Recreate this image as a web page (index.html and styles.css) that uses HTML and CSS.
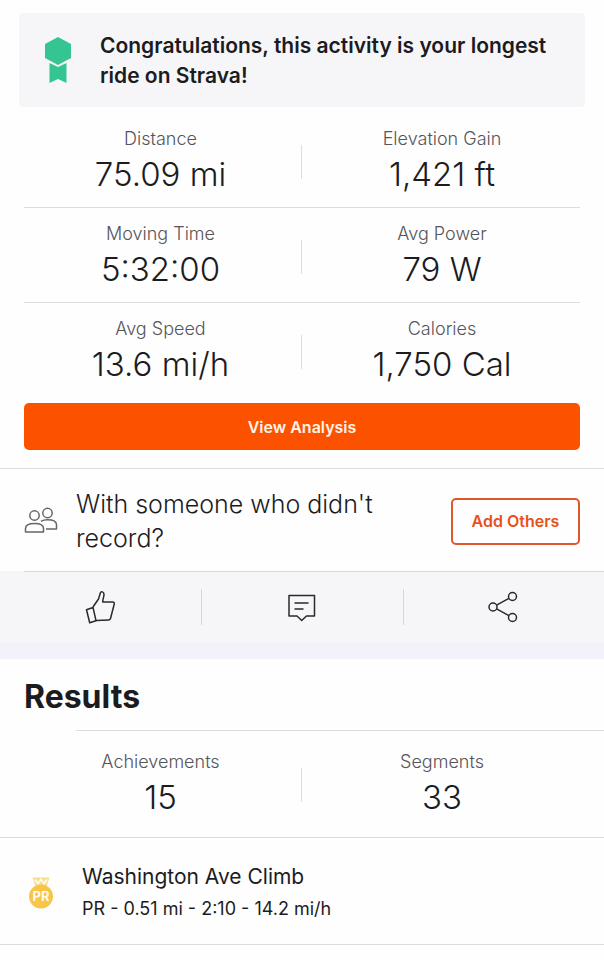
FILE: index.html
```html
<!DOCTYPE html>
<html lang="en">
	<head>
		<meta charset="UTF-8">
		<meta name="viewport" content="width=device-width, initial-scale=1">
		<title>Activity</title>
		<link rel="stylesheet" href="styles.css">
	</head>
	<body>
		<main>
			<section class="banner">
				<svg class="ribbon" width="28" height="48" viewBox="0 0 28 48" aria-hidden="true">
					<path d="M14 0l13 7v14l-13 7-13-7V7z"/>
					<path d="M5.500 26l8.500 4 8.500-4v20l-8.500-4-8.500 4z"/>
				</svg>
				<p>Congratulations, this activity is your longest ride on Strava!</p>
			</section>

			<section class="stats">
				<div class="row">
					<div class="stat"><span class="label">Distance</span><span class="value">75.09 mi</span></div>
					<div class="stat"><span class="label">Elevation Gain</span><span class="value">1,421 ft</span></div>
				</div>
				<div class="row">
					<div class="stat"><span class="label">Moving Time</span><span class="value">5:32:00</span></div>
					<div class="stat"><span class="label">Avg Power</span><span class="value">79 W</span></div>
				</div>
				<div class="row">
					<div class="stat"><span class="label">Avg Speed</span><span class="value">13.6 mi/h</span></div>
					<div class="stat"><span class="label">Calories</span><span class="value">1,750 Cal</span></div>
				</div>
				<button type="button" class="analysis">View Analysis</button>
			</section>

			<section class="others">
				<svg class="people" width="34" height="28" viewBox="0 0 34 28" aria-hidden="true">
					<circle cx="10.500" cy="8.500" r="4.700"/>
					<circle cx="23.500" cy="6" r="4.700"/>
					<path d="M1.500 25v-3.500c0-3 3.500-5 9-5s9 2 9 5V25z"/>
					<path d="M17 14.300c1.500-1 3.700-1.500 6.500-1.500 5.500 0 9 2 9 5V22H22"/>
				</svg>
				<p>With someone who didn't record?</p>
				<button type="button" class="add">Add Others</button>
			</section>

			<div class="actions">
				<button type="button" aria-label="Give kudos">
					<svg width="32" height="34" viewBox="0 0 32 34" aria-hidden="true">
						<path d="M8 17l5.500-8 2-6.500c.4-1.300 3.500-1 3.500 2 0 2.500-1.300 4.500-1.300 7.500h10c1.300 0 1.800 1 1.500 2.200L25.500 28.500c-.3 1.200-.9 1.500-2 1.500l-12.500.4"/>
						<path d="M8 17.500L1.500 19.700l3.200 13.100 6.300-2.100z"/>
					</svg>
				</button>
				<button type="button" aria-label="Comment">
					<svg width="32" height="34" viewBox="0 0 32 34" aria-hidden="true">
						<path d="M3 5.500h25.500v20.500h-8L15.700 30.500 11 26H3z"/>
						<path d="M8.500 13h14M8.500 19h9"/>
					</svg>
				</button>
				<button type="button" aria-label="Share">
					<svg width="32" height="34" viewBox="0 0 32 34" aria-hidden="true">
						<circle cx="6" cy="17" r="4"/>
						<circle cx="25.500" cy="6.500" r="4"/>
						<circle cx="25.500" cy="27.500" r="4"/>
						<path d="M9.600 15.200l12.300-6.800M9.600 18.800l12.300 6.800"/>
					</svg>
				</button>
			</div>

			<section class="results">
				<h2>Results</h2>
				<div class="row">
					<div class="stat"><span class="label">Achievements</span><span class="value">15</span></div>
					<div class="stat"><span class="label">Segments</span><span class="value">33</span></div>
				</div>
				<a class="segment" href="#">
					<svg class="medal" width="26" height="34" viewBox="0 0 26 34" aria-hidden="true">
						<path class="strap" d="M4.500 1.500h17l-3 9H7.500z"/>
						<path class="stripe" d="M7 3.500l3 4 3-4 3 4 3-4"/>
						<circle cx="13" cy="20.500" r="12"/>
						<text x="13" y="25" text-anchor="middle">PR</text>
					</svg>
					<div>
						<h3>Washington Ave Climb</h3>
						<p>PR - 0.51 mi - 2:10 - 14.2 mi/h</p>
					</div>
				</a>
			</section>
		</main>
	</body>
</html>
```
FILE: styles.css
```css
*{
	box-sizing: border-box;
	margin: 0;
	padding: 0;
}
body{
	background: #fefefe;
	color: #1c1c1f;
	font-family: Inter, "Liberation Sans", sans-serif;
}
button{
	font-family: inherit;
	cursor: pointer;
}
svg{
	flex: none;
}

.banner{
	display: flex;
	align-items: center;
	gap: 28px;
	margin: 13px 19px 6px;
	padding: 18px 25px 16px;
	border-radius: 4px;
	background: #f6f6f9;
}
.banner p{
	font-size: 21px;
	font-weight: 600;
	line-height: 30px;
}
.ribbon{
	fill: #35c592;
}

.stats{
	padding: 0 24px 18px;
}
.row{
	display: grid;
	grid-template-columns: 1fr 1fr;
	padding: 14px 0 11px;
}
.stats .row{
	border-bottom: 1px solid #dcdce2;
}
.stats .row:nth-child(3){
	padding-bottom: 17px;
	border-bottom: 0;
}
.stat{
	display: flex;
	flex-direction: column;
	align-items: center;
	height: 69px;
	padding-left: 2px;
}
.stat:first-child{
	padding: 0 5px 0 0;
	background: linear-gradient(#dcdce2, #dcdce2) right 18px / 1px 34px no-repeat;
}
.label{
	color: #55555a;
	font-size: 18px;
	font-weight: 300;
	line-height: 24px;
}
.value{
	font-size: 33px;
	font-weight: 300;
	line-height: 46px;
}
.analysis{
	display: block;
	width: 100%;
	height: 47px;
	border: 0;
	border-radius: 5px;
	background: #fc5200;
	color: #fff3e8;
	font-size: 16px;
	font-weight: 600;
}

.others{
	display: flex;
	align-items: center;
	gap: 18px;
	padding: 18px 24px 16px;
	border-top: 1px solid #dcdce2;
}
.others p{
	flex: 1;
	font-size: 25px;
	font-weight: 300;
	line-height: 34px;
}
.people{
	fill: none;
	stroke: #66666a;
	stroke-width: 1.5;
	stroke-linejoin: round;
}
.add{
	width: 129px;
	height: 47px;
	border: 2px solid #e0582a;
	border-radius: 5px;
	background: #fefefe;
	color: #e8501a;
	font-size: 16px;
	font-weight: 600;
}

.actions{
	display: grid;
	grid-template-columns: repeat(3, 1fr);
	height: 88px;
	border-bottom: 16px solid #f3f2fa;
	background: linear-gradient(#d6d6de, #d6d6de) 24px 0 / 100% 1px no-repeat #f6f6f9;
}
.actions button{
	display: flex;
	align-items: center;
	justify-content: center;
	border: 0;
	background: none;
}
.actions button + button{
	background: linear-gradient(#d6d6de, #d6d6de) left 18px / 1px 36px no-repeat;
}
.actions svg{
	fill: none;
	stroke: #2a2a2e;
	stroke-width: 1.5;
	stroke-linejoin: round;
}

.results h2{
	padding: 17px 24px 12px;
	font-size: 32px;
	font-weight: 700;
	line-height: 42px;
}
.results .row{
	padding: 20px 24px 18px;
	background: linear-gradient(#dcdce2, #dcdce2) 76px 0 / 100% 1px no-repeat;
}
.segment{
	display: flex;
	align-items: center;
	gap: 28px;
	padding: 23px 28px 19px;
	border-top: 1px solid #dcdce2;
	border-bottom: 1px solid #dcdce2;
	color: inherit;
	text-decoration: none;
}
.segment h3{
	font-size: 21px;
	font-weight: 400;
	line-height: 32px;
}
.segment p{
	font-size: 18px;
	font-weight: 400;
	line-height: 32px;
}
.medal{
	fill: #f8c549;
}
.medal .strap{
	fill: #f6dd8e;
}
.medal .stripe{
	fill: none;
	stroke: #fffbe8;
	stroke-width: 2;
}
.medal text{
	fill: #fffbe8;
	font-size: 13px;
	font-weight: 700;
}
```
